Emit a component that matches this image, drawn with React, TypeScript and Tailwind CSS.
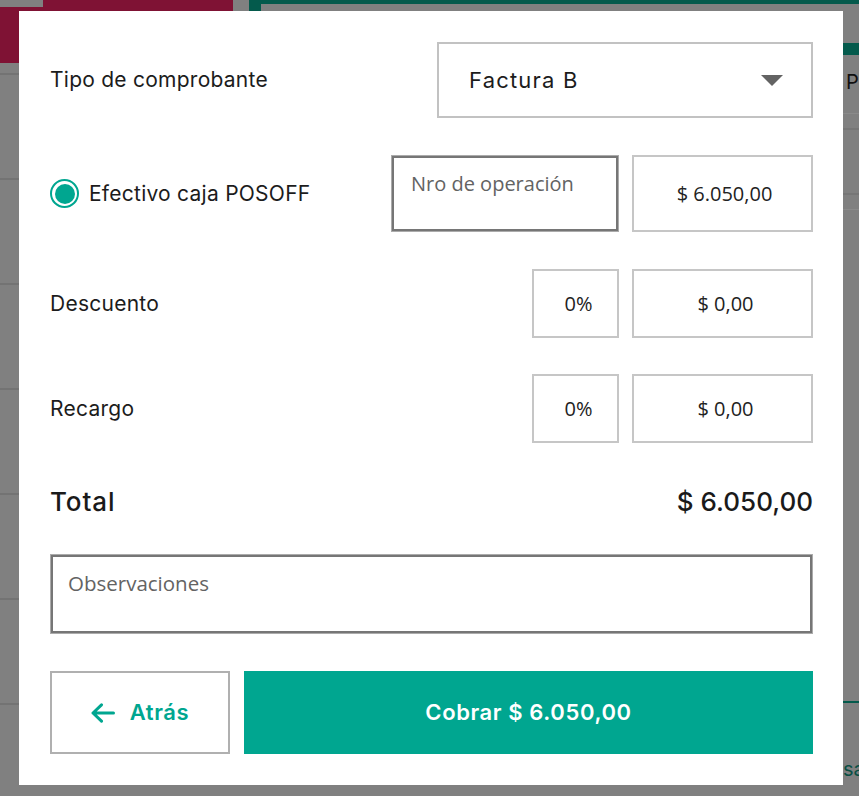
const label = "font-['Inter',sans-serif] text-[21px] tracking-[0.25px] text-[#1c1c1c]";
const openSans = "font-['Open_Sans',sans-serif]";
const value = `${openSans} text-[20px] text-[#222]`;
const box = 'flex h-full items-center justify-center border-2 border-[#c6c6c6]';
const field = `border-2 border-[#767676] leading-[27px] shadow-[0_0_0_1px_#ababab] ${openSans} text-[#636363]`;

const Backdrop = () => {
  return (
    <div className="flex h-full flex-col">
      {/* header of the page behind */}
      <header className="flex h-[63px] shrink-0">
        <div className="w-[233px] bg-[#7f1234]">
          <div className="h-[7px] w-[43px] bg-[#808080]" />
        </div>
        <div className="w-[16px]" />
        <div className="flex flex-1 border-t-4 border-[#045a4c]">
          <div className="h-[7px] w-[12px] bg-[#045a4c]" />
          <div className="flex-1" />
          <div className="w-[16px] pt-[39px]">
            <div className="h-[12px] bg-[#045a4c]" />
          </div>
        </div>
      </header>

      <div className="flex flex-1">
        <div className="flex w-[19px] flex-col pt-[10px]">
          {[0, 1, 2, 3, 4, 5, 6].map((i) => (
            <div key={i} className="mb-[103px] h-[2px] bg-[#737373]" />
          ))}
        </div>
        <div className="flex-1" />
        <div className="flex w-[16px] flex-col overflow-hidden">
          <span className="mt-[7px] pl-[3px] font-['Inter',sans-serif] text-[20px] leading-[24px] text-[#101010]">
            P
          </span>
          <div className="mt-[19px] h-px bg-[#8a8a8a]" />
          <div className="mt-[14px] h-[2px] bg-[#767676]" />
          <div className="mt-[63px] h-[2px] bg-[#767676]" />
          <div className="mt-[14px] h-px bg-[#8a8a8a]" />
          <div className="mt-[491px] h-[2px] bg-[#045a4c]" />
          <span className="mt-[56px] whitespace-nowrap font-['Inter',sans-serif] text-[20px] leading-[20px] text-[#0a4f44]">
            sa
          </span>
        </div>
      </div>

      {/* tabs of the page behind */}
      <footer className="flex h-[11px] shrink-0 overflow-hidden pl-[294px] font-['Inter',sans-serif] text-[20px] leading-[20px] text-[#0a4f44]">
        <div className="flex w-[119px] justify-center border-x-2 border-[#045a4c] bg-[#627a74]">caja</div>
        <div className="w-[32px]" />
        <div className="flex w-[119px] justify-center border-x-2 border-[#045a4c]">go</div>
        <div className="w-[32px]" />
        <div className="flex w-[119px] justify-center border-x-2 border-[#045a4c]">Master a</div>
        <div className="w-[32px]" />
        <div className="flex w-[119px] justify-center border-l-2 border-[#045a4c]">a cobrar</div>
      </footer>
    </div>
  );
};

const App = () => {
  return (
    <div className="relative h-[796px] w-full overflow-hidden bg-[#808080]">
      <Backdrop />

      <div className="absolute left-[19px] top-[11px] flex w-[824px] flex-col bg-white pb-[31px] pl-[31px] pr-[30px] pt-[31px]">
        <div className="flex h-[76px] items-center justify-between">
          <span className={label}>Tipo de comprobante</span>
          <div className="flex h-full w-[376px] items-center justify-between border-2 border-[#c2c2c2] pl-[30px] pr-[28px]">
            <span className="font-['Inter',sans-serif] text-[22px] tracking-[1.2px] text-[#1c1c1c]">Factura B</span>
            <svg width="22" height="11" viewBox="0 0 22 11">
              <polygon points="0,0 22,0 11,11" fill="#636363" />
            </svg>
          </div>
        </div>

        <div className="mt-[37px] flex h-[77px] items-center">
          <label className="flex flex-1 items-center gap-[10px]">
            <span className="flex h-[29px] w-[29px] items-center justify-center rounded-full border-2 border-[#00a690]">
              <span className="h-[20px] w-[20px] rounded-full bg-[#00a690]" />
            </span>
            <span className={label}>Efectivo caja POSOFF</span>
          </label>
          <div className={`my-px h-[75px] w-[226px] px-[17px] pt-[12px] text-[20px] ${field}`}>
            Nro de operación
          </div>
          <div className={`ml-[14px] w-[181px] pl-[4px] ${box} ${value}`}>$ 6.050,00</div>
        </div>

        <div className="mt-[37px] flex h-[69px] items-center">
          <span className={`flex-1 ${label}`}>Descuento</span>
          <div className={`w-[87px] pl-[6px] ${box} ${value}`}>0%</div>
          <div className={`ml-[13px] w-[181px] pl-[6px] ${box} ${value}`}>$ 0,00</div>
        </div>

        <div className="mt-[36px] flex h-[69px] items-center">
          <span className={`flex-1 ${label}`}>Recargo</span>
          <div className={`w-[87px] pl-[6px] ${box} ${value}`}>0%</div>
          <div className={`ml-[13px] w-[181px] pl-[6px] ${box} ${value}`}>$ 0,00</div>
        </div>

        <div className="mt-[38px] flex h-[40px] items-center justify-between font-['Inter',sans-serif] text-[26px] font-medium text-[#1a1a1a]">
          <span className="tracking-[0.9px]">Total</span>
          <span>$ 6.050,00</span>
        </div>

        <div className={`mx-px mt-[34px] h-[78px] px-[15px] pt-[13px] text-[20.5px] ${field}`}>
          Observaciones
        </div>

        <div className="mt-[38px] flex h-[83px] gap-[14px] font-['Inter',sans-serif] text-[22px] font-semibold tracking-[0.6px]">
          <button className="flex w-[180px] items-center justify-center gap-[15px] border-2 border-[#b0b0b0] text-[#00a690]">
            <svg width="24" height="20" viewBox="0 0 24 20" fill="none" stroke="currentColor" strokeWidth="3" strokeLinecap="round" strokeLinejoin="round">
              <path d="M10.5 1.8 L2 10 L10.5 18.2 M2 10 H22.5" />
            </svg>
            Atrás
          </button>
          <button className="flex flex-1 items-center justify-center bg-[#00a690] text-white">
            Cobrar $ 6.050,00
          </button>
        </div>
      </div>
    </div>
  );
};

export default App;
